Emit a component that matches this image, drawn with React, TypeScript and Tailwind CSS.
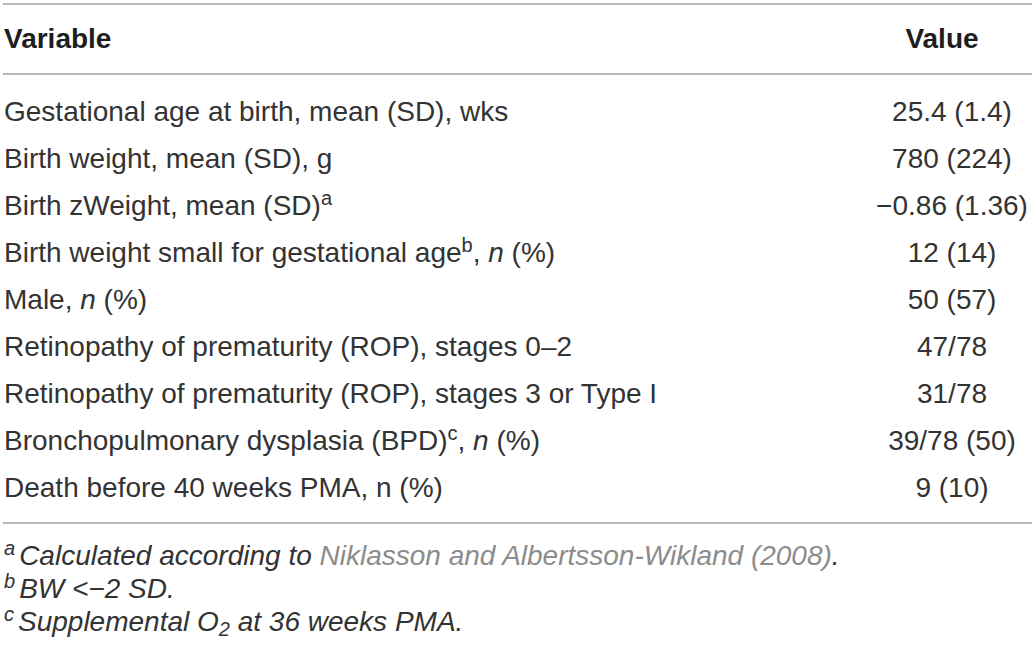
const rows: { label: React.ReactNode; value: string }[] = [
  { label: "Gestational age at birth, mean (SD), wks", value: "25.4 (1.4)" },
  { label: "Birth weight, mean (SD), g", value: "780 (224)" },
  {
    label: (
      <>
        Birth zWeight, mean (SD)<sup className="text-[20px]">a</sup>
      </>
    ),
    value: "\u22120.86 (1.36)",
  },
  {
    label: (
      <>
        Birth weight small for gestational age<sup className="text-[20px]">b</sup>, <i>n</i> (%)
      </>
    ),
    value: "12 (14)",
  },
  {
    label: (
      <>
        Male, <i>n</i> (%)
      </>
    ),
    value: "50 (57)",
  },
  { label: "Retinopathy of prematurity (ROP), stages 0\u20132", value: "47/78" },
  { label: "Retinopathy of prematurity (ROP), stages 3 or Type I", value: "31/78" },
  {
    label: (
      <>
        Bronchopulmonary dysplasia (BPD)<sup className="text-[20px]">c</sup>, <i>n</i> (%)
      </>
    ),
    value: "39/78 (50)",
  },
  { label: "Death before 40 weeks PMA, n (%)", value: "9 (10)" },
];

export default function App() {
  return (
    <div className="w-[1036px] h-[647px] bg-white pl-[3px] pr-[4px] font-['Liberation_Sans',Arial,sans-serif] text-[#333333]">
      <div className="mt-[3px] border-t-2 border-b-2 border-[#b8b8b8] h-[72px] flex items-center">
        <div className="flex-1 pl-[1px] text-[28px] font-bold text-[#1e1e1e]">Variable</div>
        <div className="w-[160px] pr-[20px] text-center text-[28px] font-bold text-[#1e1e1e]">Value</div>
      </div>
      <div className="pt-[13px] pb-[11px] border-b-2 border-[#b8b8b8]">
        {rows.map((r, i) => (
          <div key={i} className="h-[47px] flex items-center text-[28px] leading-none">
            <div className="flex-1 pl-[1px] whitespace-nowrap">{r.label}</div>
            <div className="w-[160px] text-center whitespace-nowrap">{r.value}</div>
          </div>
        ))}
      </div>
      <div className="pt-[15px] pl-[1px] text-[28px] italic leading-[33px]">
        <p>
          <sup className="text-[20px] mr-[4px]">a</sup>Calculated according to{" "}
          <span className="text-[#8c8c8c]">Niklasson and Albertsson-Wikland (2008)</span>.
        </p>
        <p>
          <sup className="text-[20px] mr-[4px]">b</sup>BW &lt;&minus;2 SD.
        </p>
        <p>
          <sup className="text-[20px] mr-[4px]">c</sup>Supplemental O<sub className="text-[20px]">2</sub> at 36 weeks PMA.
        </p>
      </div>
    </div>
  );
}
